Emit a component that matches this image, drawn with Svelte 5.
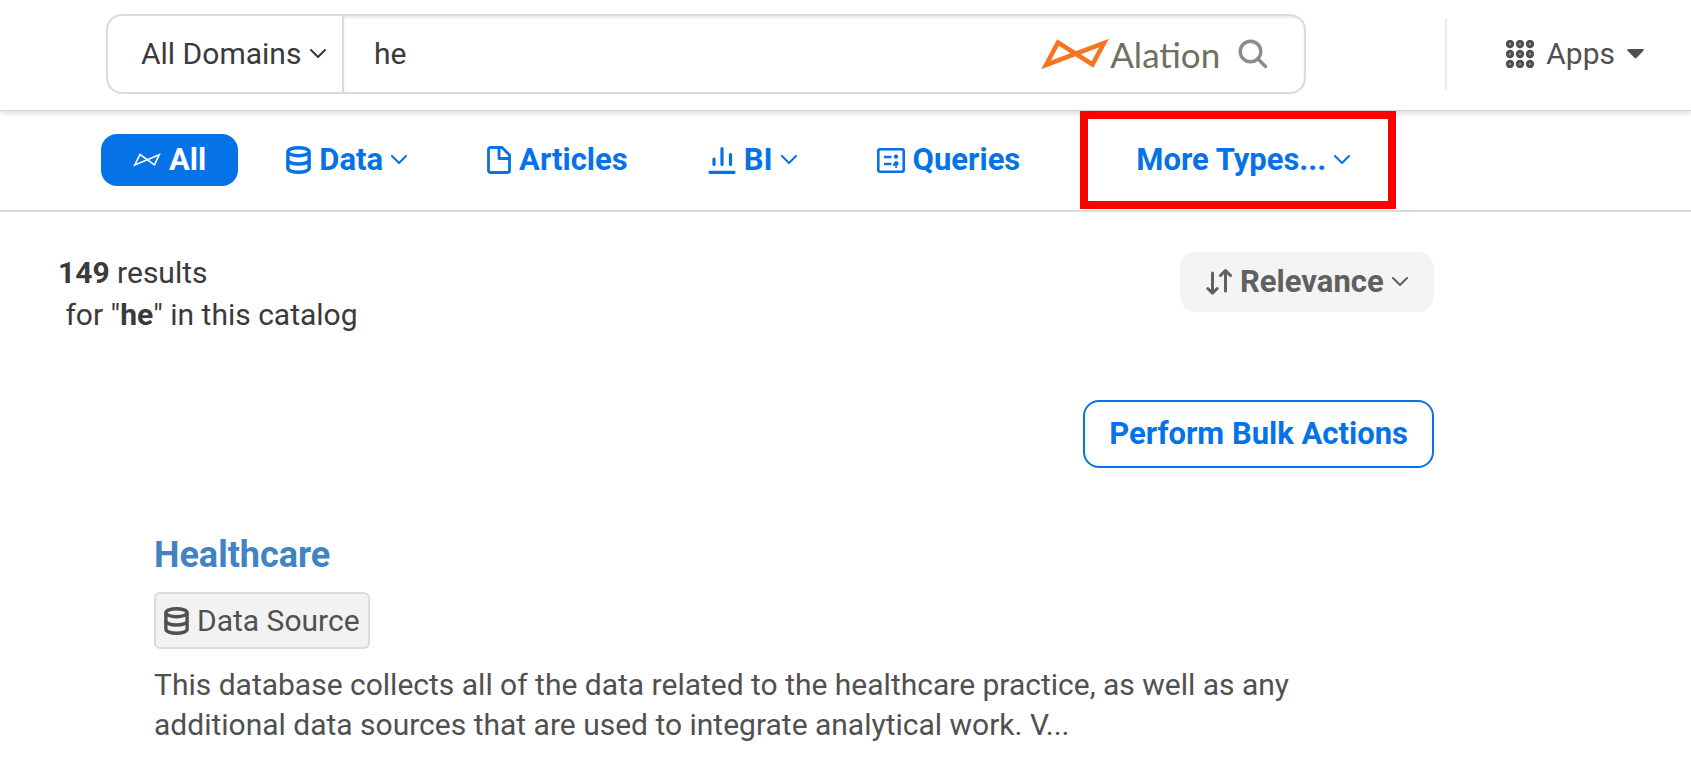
<script>
  let domain = $state('All Domains');
  let query = $state('he');
  let sort = $state('Relevance');
  let active = $state('All');

  const tabs = [
    { label: 'All', icon: 'bow', menu: false },
    { label: 'Data', icon: 'database', menu: true },
    { label: 'Articles', icon: 'file', menu: false },
    { label: 'BI', icon: 'chart', menu: true },
    { label: 'Queries', icon: 'query', menu: false }
  ];
  const dots = [4, 14, 24];
</script>

{#snippet chevron()}
  <svg class="chevron" width="16" height="10" viewBox="0 0 16 10" aria-hidden="true">
    <path d="M1 1l7 7 7-7" />
  </svg>
{/snippet}

{#snippet icon(name)}
  {#if name === 'bow'}
    <svg width="28" height="14" viewBox="0 0 28 14" stroke-width="1.600" stroke-miterlimit="10" aria-hidden="true">
      <path d="M1.8 12L7 1.5L21.500 11.800L26.200 1.800Z" />
    </svg>
  {:else if name === 'database'}
    <svg width="25" height="28" viewBox="0 0 25 28" stroke-width="3.400" aria-hidden="true">
      <ellipse cx="12.500" cy="5.700" rx="10.600" ry="4" />
      <path d="M1.900 5.700v16.600c0 2.200 4.700 4 10.600 4s10.600-1.800 10.600-4V5.700" />
      <path d="M1.900 14c0 2.200 4.700 4 10.600 4s10.600-1.800 10.600-4" />
    </svg>
  {:else if name === 'file'}
    <svg width="24" height="28" viewBox="0 0 24 28" stroke-width="2.800" stroke-linejoin="round" aria-hidden="true">
      <path d="M4 1.500h11L22.500 9v15.500a2 2 0 0 1-2 2H3.500a2 2 0 0 1-2-2V3.500a2 2 0 0 1 2-2z" />
      <path d="M12 1.500V12.500H22.500" />
    </svg>
  {:else if name === 'chart'}
    <svg width="28" height="28" viewBox="0 0 28 28" stroke-width="3.200" stroke-linecap="round" aria-hidden="true">
      <path d="M2 26.300h24M6 13v5.500M14 2.500v16M22.500 8.500v10" />
    </svg>
  {:else if name === 'query'}
    <svg width="28" height="25" viewBox="0 0 28 25" stroke-width="2.600" aria-hidden="true">
      <rect x="1.300" y="1.300" width="25.400" height="22.400" rx="2" />
      <path d="M7 9h7.500M7 16h7.500" />
      <path class="solid" d="M19 6.400a2.200 2.200 0 1 0 .01 0zM19 12.900a2.600 2.600 0 0 1 2.600 2.500c0 1.200-.8 1.900-1.700 2.200V20h-1.600v-2.300h-2.300v-2.100h.9c.2-1.700 1-2.700 2.100-2.700z" />
    </svg>
  {/if}
{/snippet}

<header>
  <form class="search" role="search" onsubmit={(e) => e.preventDefault()}>
    <label class="domains">
      <select bind:value={domain} aria-label="Domain">
        <option>All Domains</option>
      </select>
      {@render chevron()}
    </label>
    <div class="field">
      <input type="text" bind:value={query} aria-label="Search" />
      <span class="brand">
        <svg width="68" height="32" viewBox="0 0 68 32" stroke-width="4.600" stroke-miterlimit="10" aria-hidden="true">
          <path d="M5 27L17 4.500L51.500 26.500L63 5Z" />
        </svg>
        <span>Alation</span>
      </span>
      <button type="submit" class="go" aria-label="Submit search">
        <svg width="30" height="30" viewBox="0 0 30 30" stroke-width="3.400" stroke-linecap="round" aria-hidden="true">
          <circle cx="12.500" cy="12.500" r="10.300" />
          <path d="M20 20l7.500 7.500" />
        </svg>
      </button>
    </div>
  </form>
  <div class="tools">
    <button type="button" class="apps">
      <svg width="28" height="28" viewBox="0 0 28 28" stroke-width="3.400" aria-hidden="true">
        {#each dots as y}
          {#each dots as x}
            <circle cx={x} cy={y} r="2.500" />
          {/each}
        {/each}
      </svg>
      <span>Apps</span>
      <svg class="caret" width="17" height="10" viewBox="0 0 17 10" aria-hidden="true">
        <path d="M1 0h15q1.400.4.4 1.700L9.400 9q-.9.900-1.800 0L.6 1.700Q-.4.400 1 0z" />
      </svg>
    </button>
  </div>
</header>

<nav aria-label="Result types">
  {#each tabs as tab}
    <button type="button" class="tab" class:active={active === tab.label} onclick={() => (active = tab.label)}>
      {@render icon(tab.icon)}
      <span>{tab.label}</span>
      {#if tab.menu}{@render chevron()}{/if}
    </button>
  {/each}
  <div class="highlight">
    <button type="button" class="tab">
      <span>More Types...</span>
      {@render chevron()}
    </button>
  </div>
</nav>

<main>
  <div class="summary">
    <p><strong>149</strong> results<br />&nbsp;for "<strong>he</strong>" in this catalog</p>
    <div class="actions">
      <label class="sort">
        <svg width="26" height="28" viewBox="0 0 26 28" stroke-width="3" stroke-linecap="round" stroke-linejoin="round" aria-hidden="true">
          <path d="M6.500 5v20M1.800 20.500l4.700 4.700 4.700-4.700M19.500 23V3M14.500 7.500l5-5 5 5" />
        </svg>
        <select bind:value={sort} aria-label="Sort by">
          <option>Relevance</option>
        </select>
        {@render chevron()}
      </label>
      <button type="button" class="bulk">Perform Bulk Actions</button>
    </div>
  </div>

  <article>
    <h2><a href="#healthcare">Healthcare</a></h2>
    <span class="badge">
      {@render icon('database')}
      Data Source
    </span>
    <p>
      This database collects all of the data related to the healthcare practice, as well as any
      additional data sources that are used to integrate analytical work. V...
    </p>
  </article>
</main>

<style>
  :global(body) {
    background: #fff;
    color: #3a3a3a;
    font: 400 30px/40px Roboto, 'Liberation Sans', sans-serif;
  }

  button,
  select,
  input {
    appearance: none;
    margin: 0;
    padding: 0;
    border: 0;
    outline: 0;
    background: none;
    color: inherit;
    font: inherit;
    letter-spacing: inherit;
  }

  button,
  select {
    cursor: pointer;
  }

  svg {
    flex: none;
    fill: none;
    stroke: currentColor;
  }

  .chevron {
    stroke-width: 2;
    stroke-linecap: round;
    stroke-linejoin: round;
  }

  .solid {
    fill: currentColor;
    stroke: none;
  }

  header {
    position: relative;
    display: flex;
    align-items: center;
    padding: 14px 47px 16px 106px;
    border-bottom: 1px solid #d4d4d4;
    box-shadow: 0 2px 6px rgba(0, 0, 0, 0.16);
  }

  .search {
    display: flex;
    flex: 1;
    height: 76px;
    min-width: 0;
    border: 2px solid #dbdbdb;
    border-radius: 16px;
    overflow: hidden;
  }

  .domains {
    display: flex;
    align-items: center;
    justify-content: space-between;
    box-sizing: border-box;
    width: 236px;
    padding: 0 16px 0 33px;
    border-right: 2px solid #dbdbdb;
  }

  .field {
    display: flex;
    flex: 1;
    align-items: center;
    min-width: 0;
    padding: 0 36px 0 30px;
    box-shadow: inset 0 2px 3px rgba(0, 0, 0, 0.09);
  }

  .field input {
    flex: 1;
    min-width: 0;
  }

  .brand {
    display: flex;
    align-items: center;
    gap: 1px;
    color: #6f7060;
    font: 400 35px/40px Lato, sans-serif;
  }

  .brand svg {
    stroke: #f87420;
  }

  .go {
    display: flex;
    margin-left: 18px;
    color: #8c8c8c;
  }

  .tools {
    display: flex;
    align-items: center;
    height: 72px;
    margin-left: 139px;
    padding-left: 59px;
    border-left: 2px solid #ebebeb;
  }

  .apps {
    display: flex;
    align-items: center;
    gap: 12px;
    color: #505050;
  }

  .caret {
    fill: currentColor;
    stroke: none;
  }

  nav {
    display: flex;
    gap: 16px;
    padding: 0 0 1px 101px;
    border-bottom: 2px solid #dbdbdb;
    color: #0573e7;
    font-size: 31px;
    font-weight: 700;
  }

  .tab {
    display: flex;
    align-items: center;
    gap: 8px;
    align-self: center;
    height: 52px;
    padding: 0 32px;
    border-radius: 16px;
    white-space: nowrap;
  }

  .active {
    background: #0573e7;
    color: #fff;
  }

  .highlight {
    position: relative;
    display: flex;
    height: 82px;
    margin-left: 12px;
    padding: 0 6px 0 16px;
    border: 8px solid #f00;
  }

  main {
    box-sizing: border-box;
    max-width: 1434px;
    padding: 40px 0 16px 58px;
  }

  p {
    margin: 0;
  }

  .summary {
    display: flex;
    justify-content: space-between;
    line-height: 42px;
  }

  .actions {
    display: flex;
    flex-direction: column;
    align-items: flex-end;
    gap: 88px;
    font-size: 31px;
    font-weight: 700;
  }

  .sort {
    display: flex;
    align-items: center;
    gap: 8px;
    height: 60px;
    padding: 0 26px;
    border-radius: 16px;
    background: #f4f4f4;
    color: #606060;
  }

  .bulk {
    height: 68px;
    padding: 0 24px;
    border: 2px solid #0573e7;
    border-radius: 16px;
    color: #0573e7;
  }

  article {
    padding: 66px 120px 0 96px;
    color: #505050;
  }

  h2 {
    margin: 0 0 16px;
    font-size: 36px;
    line-height: 42px;
  }

  a {
    color: #4183c4;
    text-decoration: none;
  }

  .badge {
    display: inline-flex;
    align-items: center;
    gap: 8px;
    height: 53px;
    margin-bottom: 16px;
    padding: 0 8px;
    border: 2px solid #dbdbdb;
    border-radius: 6px;
    background: #f2f2f2;
  }
</style>
